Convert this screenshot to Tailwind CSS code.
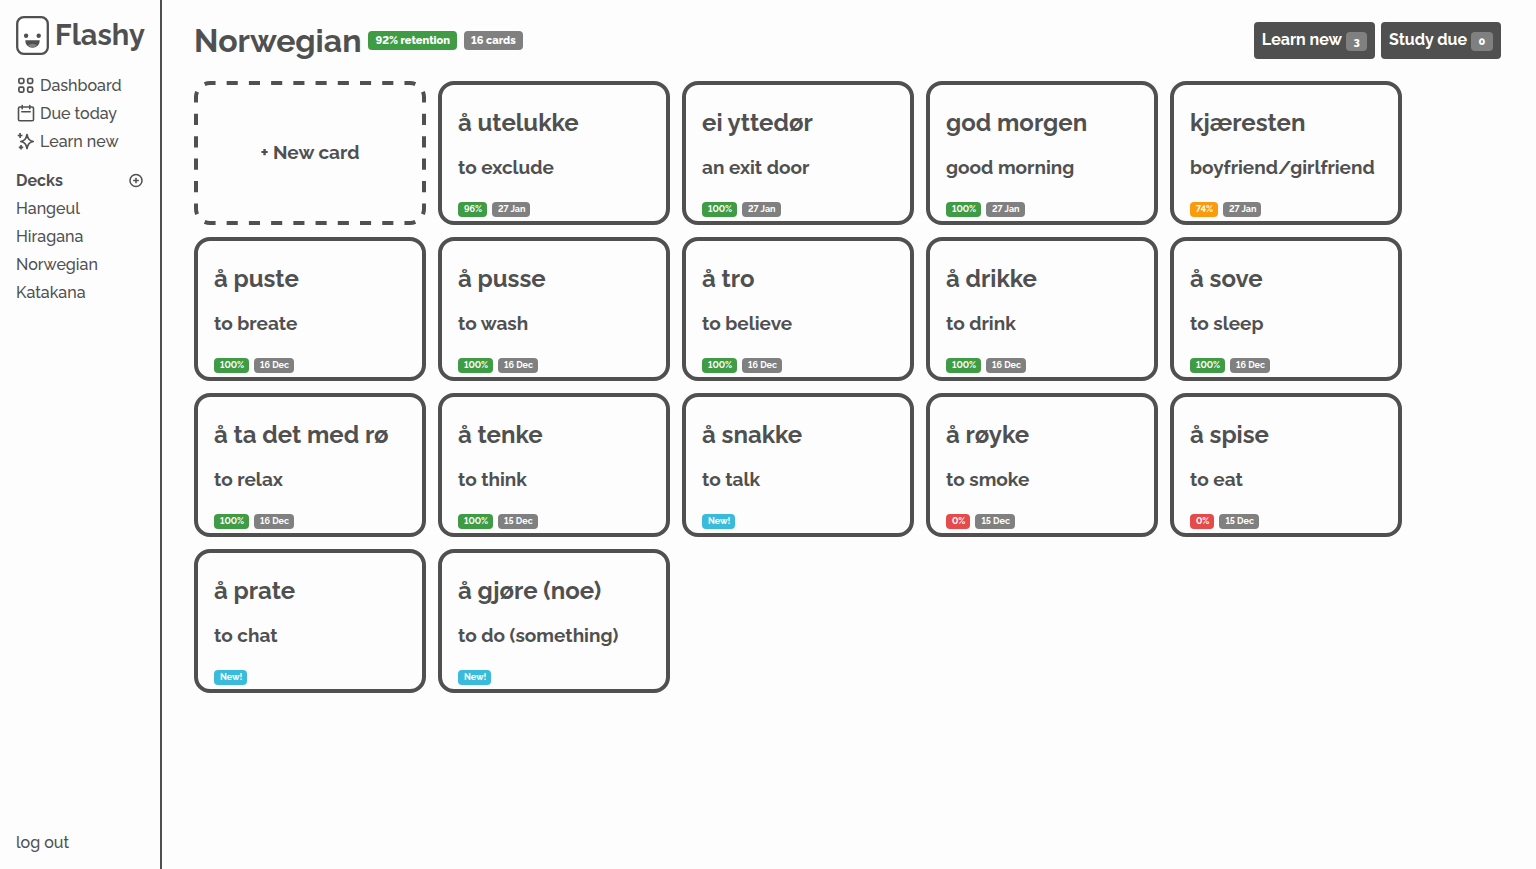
<!DOCTYPE html>
<html lang="en">
<head>
<meta charset="utf-8">
<meta name="viewport" content="width=device-width, initial-scale=1">
<title>Flashy – Norwegian</title>
<script src="https://cdn.jsdelivr.net/npm/@tailwindcss/browser@4"></script>
</head>
<body class="flex min-h-screen bg-[#fdfdfd] font-[Raleway,Lato,sans-serif] text-base text-[#505050]">
<aside class="flex w-[162px] shrink-0 flex-col border-r-2 border-[#505050] px-4 pt-4 pb-[15px] font-medium">
  <a href="#" class="flex h-[39px] items-center gap-1.5 text-[29px] font-bold">
    <svg class="h-[39px] w-[33px] shrink-0" viewBox="0 0 33 39" fill="none"><rect x="1.2" y="1.2" width="30.6" height="36.6" rx="6.5" fill="#fff" stroke="#505050" stroke-width="2.3"/><circle cx="10.100" cy="19.700" r="2.2" fill="#505050"/><circle cx="22.700" cy="19.700" r="2.2" fill="#505050"/><path d="M9.300 24.300h14.400c0 4.700-3.200 7.500-7.200 7.500s-7.200-2.800-7.200-7.500z" fill="#505050"/><path d="M12 29.200c2.500-1.700 6.500-1.700 9 0-1.200 1.500-2.700 2-4.500 2s-3.300-.5-4.500-2z" fill="#808080"/></svg>
    <span>Flashy</span>
  </a>
  <nav class="mt-[17px] flex flex-col" aria-label="Main">
    <a href="#" class="flex h-7 items-center gap-1"><svg class="size-5" viewBox="0 0 20 20" fill="none" stroke="#505050" stroke-width="1.700"><rect x="2.900" y="2.500" width="4.900" height="4.900" rx="1.300"/><rect x="11.700" y="2.500" width="4.900" height="4.900" rx="1.300"/><rect x="2.900" y="11.200" width="4.900" height="4.900" rx="1.300"/><rect x="11.700" y="11.200" width="4.900" height="4.900" rx="1.300"/></svg>Dashboard</a>
    <a href="#" class="flex h-7 items-center gap-1"><svg class="size-5" viewBox="0 0 20 20" fill="none" stroke="#505050" stroke-width="1.600" stroke-linecap="round"><rect x="2.500" y="3" width="15" height="13.800" rx="1.300"/><path d="M5.800 7.800h8.400M6.200 1.600v3.200M13.800 1.600v3.200"/></svg>Due today</a>
    <a href="#" class="flex h-7 items-center gap-1"><svg class="size-5" viewBox="0 0 20 20" fill="none" stroke="#505050" stroke-width="1.700" stroke-linejoin="round"><path d="M11 2.500c.9 4.400 2.100 5.900 6.200 7-4.100 1.100-5.300 2.600-6.200 7-.9-4.400-2.100-5.900-6.200-7 4.100-1.100 5.300-2.600 6.200-7zM4.100 1.100v4.800M1.700 3.500h4.800M5 13.100v4.400M2.800 15.300h4.400"/></svg>Learn new</a>
  </nav>
  <div class="mt-[11px] flex h-7 items-center justify-between">
    <h2 class="font-bold">Decks</h2>
    <button type="button" aria-label="Add deck"><svg class="size-4" viewBox="0 0 16 16" fill="none" stroke="#505050" stroke-width="1.500"><circle cx="8" cy="7.500" r="6"/><path d="M8 4.700v5.600M5.200 7.500h5.600"/></svg></button>
  </div>
  <nav class="flex flex-col" aria-label="Decks">
    <a href="#" class="flex h-7 items-center">Hangeul</a>
    <a href="#" class="flex h-7 items-center">Hiragana</a>
    <a href="#" class="flex h-7 items-center">Norwegian</a>
    <a href="#" class="flex h-7 items-center">Katakana</a>
  </nav>
  <a href="#" class="mt-auto leading-[22px]">log out</a>
</aside>
<main class="min-w-0 flex-1 px-8 pt-[22px]">
  <header class="flex flex-wrap items-start justify-between pr-[3px]">
    <div class="flex items-center lining-nums">
      <h1 class="mr-[7px] text-[32px] leading-[37px] font-bold">Norwegian</h1>
      <span class="mr-[7px] rounded bg-[#3f9c45] px-[7px] text-[11px] leading-[19px] font-extrabold text-white">92% retention</span>
      <span class="rounded bg-[#808080] px-[7px] text-[11px] leading-[19px] font-extrabold text-white">16 cards</span>
    </div>
    <div class="flex gap-1.5">
      <button type="button" class="flex h-[37px] items-center gap-1 rounded bg-[#505050] px-2 pb-0.5 font-bold text-white">Learn new <span class="mt-1 w-[21px] rounded bg-[#808080] text-center text-[11px] leading-[19px] font-extrabold">3</span></button>
      <button type="button" class="flex h-[37px] items-center gap-1 rounded bg-[#505050] px-2 pb-0.5 font-bold text-white">Study due <span class="mt-1 w-[22px] rounded bg-[#808080] text-center text-[11px] leading-[19px] font-extrabold">0</span></button>
    </div>
  </header>
  <section id="cards" class="mt-[22px] flex flex-wrap gap-3" aria-label="Cards">
    <button type="button" class="relative h-36 w-[232px] rounded-2xl pb-0.5 text-[19px] font-bold">
      <svg class="absolute inset-0 size-full" viewBox="0 0 232 144" fill="none" stroke="#505050" stroke-width="4" stroke-dasharray="1" stroke-dashoffset=".5" aria-hidden="true">
        <path pathLength="18" d="M16 2H216"/><path pathLength="18" d="M16 142H216"/>
        <path pathLength="10" d="M2 16V128"/><path pathLength="10" d="M230 16V128"/>
        <path pathLength="2" d="M2 16A14 14 0 0 1 16 2"/><path pathLength="2" d="M216 2A14 14 0 0 1 230 16"/>
        <path pathLength="2" d="M230 128A14 14 0 0 1 216 142"/><path pathLength="2" d="M16 142A14 14 0 0 1 2 128"/>
      </svg>
      + New card
    </button>
  </section>
</main>
<script>
const cards = [
  ["å utelukke", "to exclude", 96, "27 Jan"],
  ["ei yttedør", "an exit door", 100, "27 Jan"],
  ["god morgen", "good morning", 100, "27 Jan"],
  ["kjæresten", "boyfriend/girlfriend", 74, "27 Jan"],
  ["å puste", "to breate", 100, "16 Dec"],
  ["å pusse", "to wash", 100, "16 Dec"],
  ["å tro", "to believe", 100, "16 Dec"],
  ["å drikke", "to drink", 100, "16 Dec"],
  ["å sove", "to sleep", 100, "16 Dec"],
  ["å ta det med rø", "to relax", 100, "16 Dec"],
  ["å tenke", "to think", 100, "15 Dec"],
  ["å snakke", "to talk"],
  ["å røyke", "to smoke", 0, "15 Dec"],
  ["å spise", "to eat", 0, "15 Dec"],
  ["å prate", "to chat"],
  ["å gjøre (noe)", "to do (something)"],
];
const scoreColor = s => s >= 90 ? "bg-[#3f9c45]" : s >= 50 ? "bg-[#f99b0c]" : "bg-[#e54b4b]";
const badge = (text, color) => `<span class="rounded ${color} pr-[5px] pl-[6px] text-[9px] leading-[15px] font-bold text-white lining-nums">${text}</span>`;
document.getElementById("cards").insertAdjacentHTML("beforeend", cards.map(([front, back, score, due]) => `
  <article class="flex h-36 w-[232px] flex-col rounded-2xl border-4 border-[#505050] px-4 pt-6 font-bold whitespace-nowrap">
    <h3 class="text-[24px] leading-7">${front}</h3>
    <p class="mt-[18px] text-[19px] leading-6">${back}</p>
    <div class="mt-[23px] flex gap-[5px]">${due ? badge(score + "%", scoreColor(score)) + badge(due, "bg-[#808080]") : badge("New!", "bg-[#3bbbdc]")}</div>
  </article>`).join(""));
</script>
</body>
</html>
